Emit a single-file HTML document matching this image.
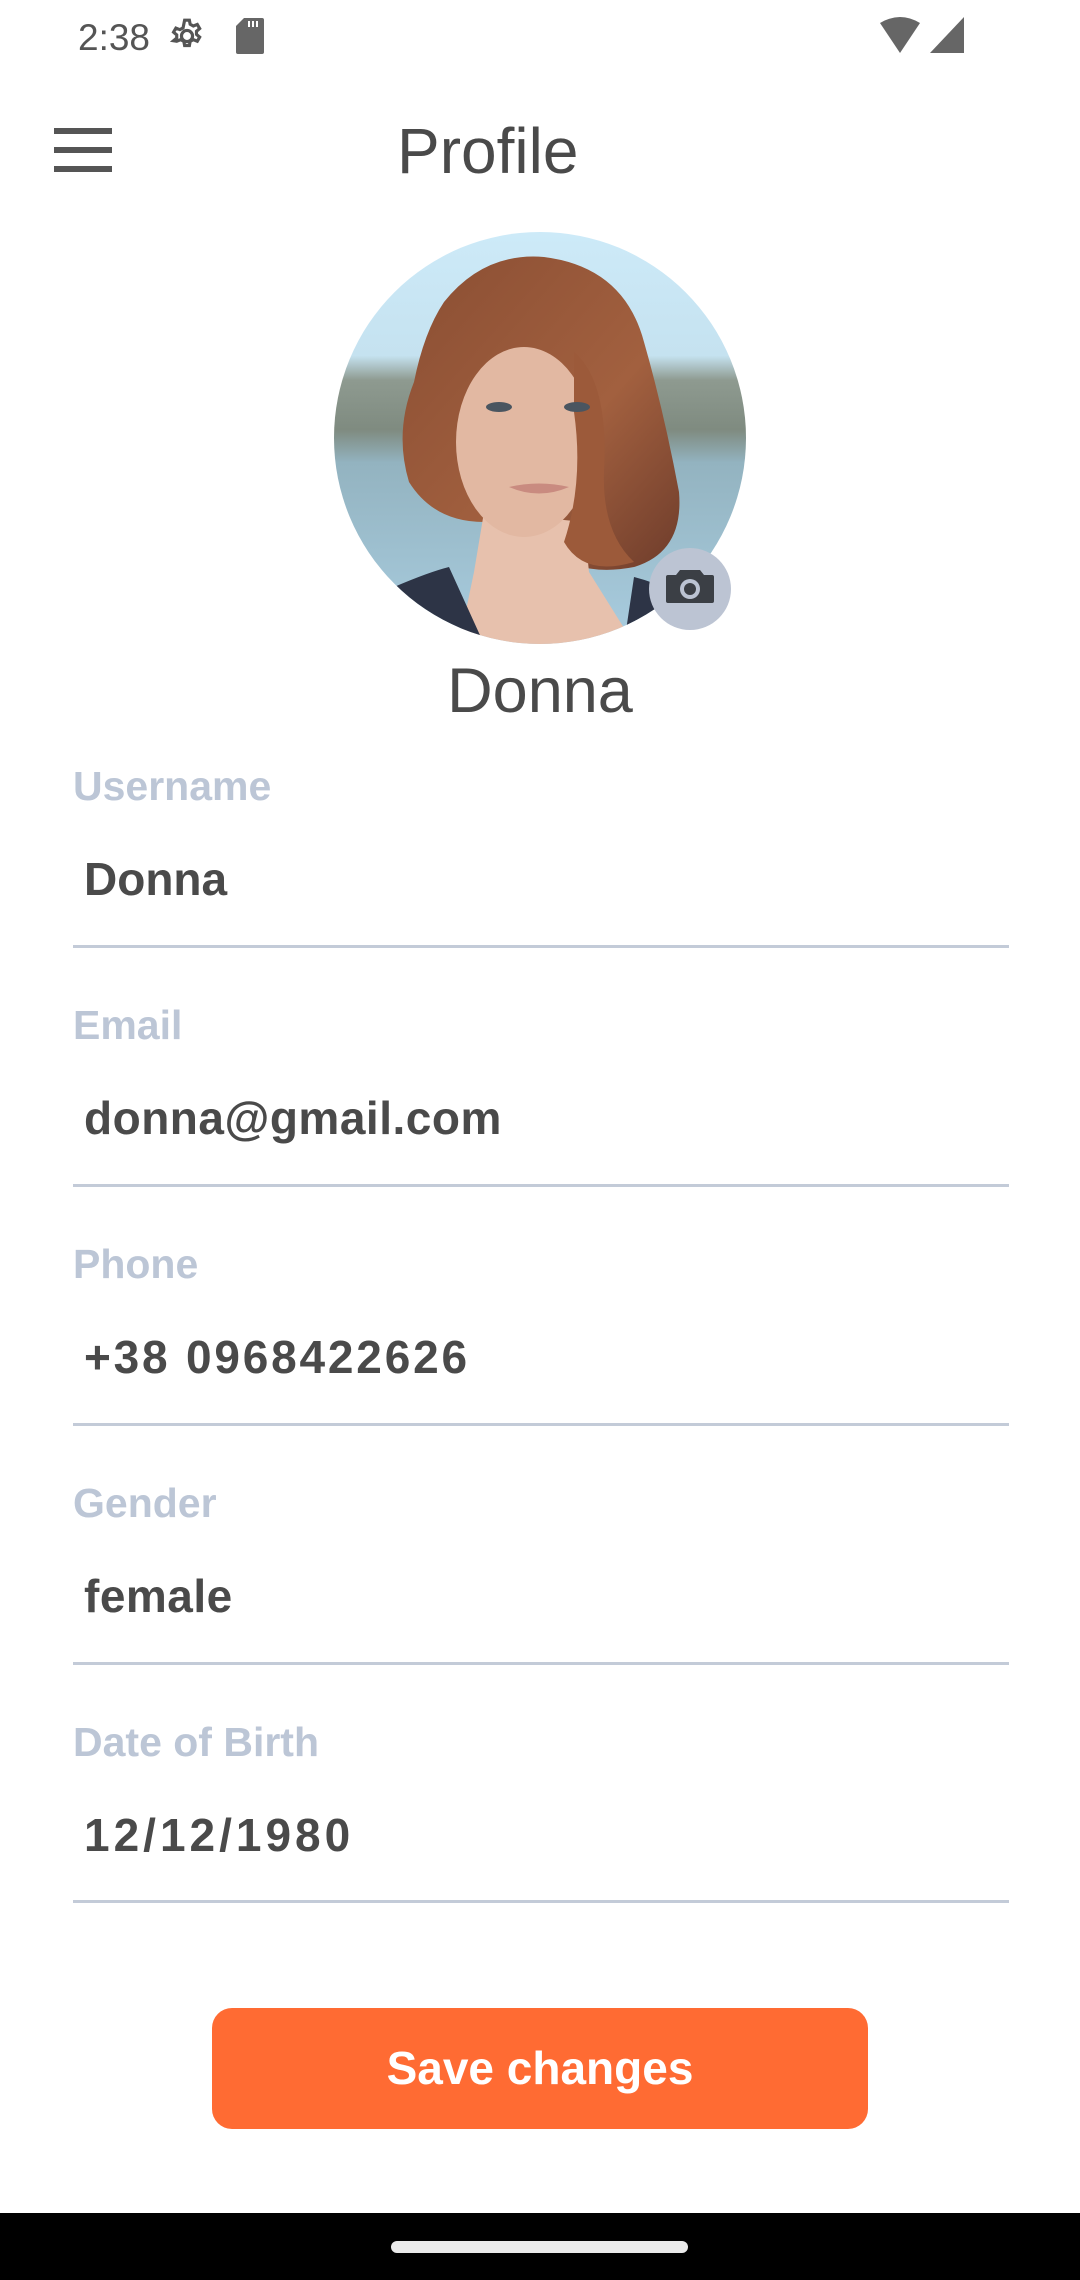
<!DOCTYPE html>
<html><head><meta charset="utf-8"><style>
*{margin:0;padding:0;box-sizing:border-box}
body{width:1080px;height:2280px;background:#fff;position:relative;overflow:hidden;font-family:"Liberation Sans",sans-serif}
.a{position:absolute;white-space:nowrap}
.lbl{left:73px;font-size:41px;font-weight:bold;color:#bcc6d6;line-height:1}
.val{left:84px;font-size:46px;font-weight:bold;color:#4a4a4a;line-height:1}
.ln{left:73px;width:936px;height:3px;background:#c3cbd8}
</style></head><body>
<div class="a" style="left:78px;top:17px;font-size:37px;color:#555">2:38</div>
<svg class="a" style="left:168px;top:17px" width="38" height="38" viewBox="0 0 24 24"><path fill="none" stroke="#555" stroke-width="2" d="M12 8.5a3.5 3.5 0 1 0 0 7a3.5 3.5 0 1 0 0-7zM10.5 2h3l.5 2.6 2 1.1 2.5-1 1.5 2.6-2 1.7v2l2 1.7-1.5 2.6-2.5-1-2 1.1-.5 2.6h-3l-.5-2.6-2-1.1-2.5 1L3.5 15l2-1.7v-2l-2-1.7L5 7l2.5 1 2-1.1z"/></svg>
<svg class="a" style="left:236px;top:18px" width="28" height="36" viewBox="0 0 14 18"><path fill="#666" d="M4 0h9a1 1 0 0 1 1 1v16a1 1 0 0 1-1 1H1a1 1 0 0 1-1-1V4z"/><path fill="#fff" d="M6 1.5h1v3H6zM8 1.5h1v3H8zM10 1.5h1v3H10z"/></svg>
<svg class="a" style="left:880px;top:17px" width="84" height="36" viewBox="0 0 84 36"><path fill="#666" d="M0 6Q20-6 40 6L20 36z"/><path fill="#666" d="M84 0V36H50z"/></svg>
<div class="a" style="left:54px;top:128px;width:58px;height:6px;background:#555"></div>
<div class="a" style="left:54px;top:147px;width:58px;height:6px;background:#555"></div>
<div class="a" style="left:54px;top:166px;width:58px;height:6px;background:#555"></div>
<div class="a" style="left:397px;top:114px;font-size:64px;color:#4a4a4a">Profile</div>
<svg class="a" style="left:334px;top:232px" width="412" height="412" viewBox="0 0 412 412">
<defs><clipPath id="c"><circle cx="206" cy="206" r="206"/></clipPath>
<linearGradient id="bg" x1="0" y1="0" x2="0" y2="1"><stop offset="0" stop-color="#cdeaf8"/><stop offset=".3" stop-color="#c5e2f0"/><stop offset=".36" stop-color="#8e9a90"/><stop offset=".48" stop-color="#7f8b80"/><stop offset=".56" stop-color="#93b3c0"/><stop offset="1" stop-color="#a9cde0"/></linearGradient>
<linearGradient id="hair" x1="0" y1="0" x2="1" y2="1"><stop offset="0" stop-color="#8a4e33"/><stop offset=".6" stop-color="#a2603f"/><stop offset="1" stop-color="#6e3c2b"/></linearGradient></defs>
<g clip-path="url(#c)">
<rect width="412" height="412" fill="url(#bg)"/>
<path fill="url(#hair)" d="M110 70Q150 20 210 25Q290 35 310 110Q330 180 345 260Q350 320 300 335Q250 345 215 320L150 290Q100 290 75 250Q60 200 80 150Q90 100 110 70z"/>
<path fill="#e7c1ad" d="M255 340L250 290L150 280L140 340L125 412H300z"/>
<ellipse cx="190" cy="210" rx="68" ry="95" fill="#e2b8a2"/>
<path fill="#9c5a3a" d="M240 120Q275 150 270 240Q268 300 300 330Q250 345 230 310Q250 250 240 180z"/>
<path fill="#2d3446" d="M60 355Q95 340 115 335L150 412H40zM300 345Q320 350 340 360V412H290z"/>
<ellipse cx="165" cy="175" rx="13" ry="5" fill="#4a5560"/><ellipse cx="243" cy="175" rx="13" ry="5" fill="#4a5560"/>
<path fill="#c98b80" d="M175 255Q205 248 235 255Q205 268 175 255z"/>
</g>
<circle cx="356" cy="357" r="41" fill="#bcc4d3"/>
<path fill="#3b3f45" d="M334 343h8l4-5h20l4 5h8a2 2 0 0 1 2 2v24a2 2 0 0 1-2 2h-44a2 2 0 0 1-2-2v-24a2 2 0 0 1 2-2z"/>
<circle cx="356" cy="357" r="10" fill="#bcc4d3"/><circle cx="356" cy="357" r="6" fill="#3b3f45"/>
</svg>
<div class="a" style="left:0;width:1080px;text-align:center;top:655px;font-size:63px;color:#4a4a4a">Donna</div>

<div class="a lbl" style="top:766px">Username</div>
<div class="a val" style="top:856px">Donna</div>
<div class="a ln" style="top:945px"></div>

<div class="a lbl" style="top:1005px">Email</div>
<div class="a val" style="top:1095px;letter-spacing:0.5px">donna@gmail.com</div>
<div class="a ln" style="top:1184px"></div>

<div class="a lbl" style="top:1244px">Phone</div>
<div class="a val" style="top:1334px;letter-spacing:2.8px">+38 0968422626</div>
<div class="a ln" style="top:1423px"></div>

<div class="a lbl" style="top:1483px">Gender</div>
<div class="a val" style="top:1573px;letter-spacing:0.5px">female</div>
<div class="a ln" style="top:1662px"></div>

<div class="a lbl" style="top:1722px">Date of Birth</div>
<div class="a val" style="top:1812px;letter-spacing:4px">12/12/1980</div>
<div class="a ln" style="top:1900px"></div>

<div class="a" style="left:212px;top:2008px;width:656px;height:121px;background:#ff6b33;border-radius:20px;color:#fff;font-size:46px;font-weight:bold;text-align:center;line-height:121px">Save changes</div>
<div class="a" style="left:0;top:2213px;width:1080px;height:67px;background:#000"></div>
<div class="a" style="left:391px;top:2241px;width:297px;height:12px;border-radius:6px;background:#eaeaea"></div>
</body></html>
